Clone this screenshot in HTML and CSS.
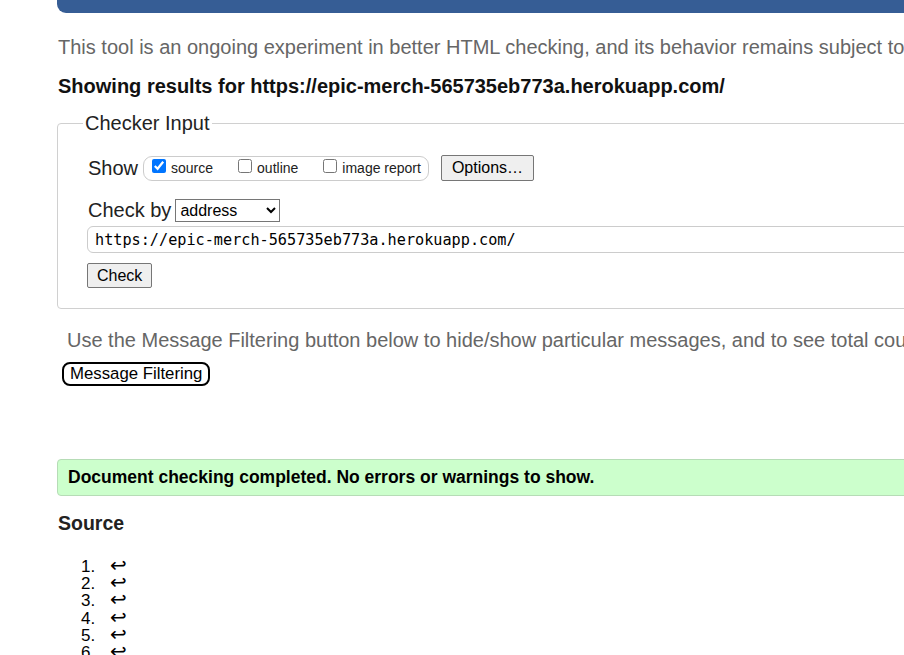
FILE: index.html
```html
<!DOCTYPE html>
<html lang="en">
<head>
<meta charset="utf-8">
<title>Nu Html Checker</title>
<link rel="stylesheet" href="styles.css">
</head>
<body>
<div class="page">
  <div class="topbar"></div>
  <p class="intro">This tool is an ongoing experiment in better HTML checking, and its behavior remains subject to change</p>
  <h2 class="results">Showing results for https://epic-merch-565735eb773a.herokuapp.com/</h2>
  <fieldset class="checker">
    <legend>Checker Input</legend>
    <div class="row show-row">
      <span class="label">Show</span>
      <div class="showbox">
        <label class="opt"><input type="checkbox" checked> source</label>
        <label class="opt"><input type="checkbox"> outline</label>
        <label class="opt"><input type="checkbox"> image report</label>
      </div>
      <button class="btn options">Options…</button>
    </div>
    <div class="row checkby-row">
      <span class="label">Check by</span>
      <select class="sel"><option>address</option></select>
    </div>
    <input class="url" type="text" value="https://epic-merch-565735eb773a.herokuapp.com/">
    <div class="row">
      <button class="btn check">Check</button>
    </div>
  </fieldset>
  <p class="filter-note">Use the Message Filtering button below to hide/show particular messages, and to see total counts of errors and warnings.</p>
  <button class="msgfilter">Message Filtering</button>
  <div class="success">Document checking completed. No errors or warnings to show.</div>
  <h3 class="source">Source</h3>
  <ol class="lines">
    <li><span class="lf">↩</span></li>
    <li><span class="lf">↩</span></li>
    <li><span class="lf">↩</span></li>
    <li><span class="lf">↩</span></li>
    <li><span class="lf">↩</span></li>
    <li><span class="lf">↩</span></li>
    <li><span class="lf">↩</span></li>
  </ol>
</div>
</body>
</html>
```
FILE: styles.css
```css
html, body {
  margin: 0;
  padding: 0;
  overflow: hidden;
  background: #fff;
}
body {
  font-family: "Liberation Sans", Arial, sans-serif;
  color: #000;
}
.page {
  width: 1300px;
  padding-left: 57px;
}
.topbar {
  height: 13px;
  background: #365d95;
  border-bottom-left-radius: 9px;
}
.intro {
  margin: 23px 0 0 1px;
  font-size: 20px;
  line-height: 22px;
  color: #666;
  white-space: nowrap;
}
.results {
  margin: 16px 0 0 1px;
  font-size: 20px;
  line-height: 24px;
  font-weight: bold;
  color: #111;
}
.checker {
  margin: 14px 0 0 0;
  padding: 20px 0 20px 30px;
  border: 1px solid #d0d0d0;
  border-radius: 4px;
}
.checker legend {
  font-size: 20px;
  color: #222;
  padding: 0 2px;
  margin-left: -5px;
}
.row {
  display: flex;
  align-items: center;
}
.label {
  font-size: 20px;
  color: #222;
}
.showbox {
  display: flex;
  align-items: center;
  margin-left: 5px;
  height: 23px;
  padding: 0 7px 0 8px;
  border: 1px solid #ccc;
  border-radius: 9px;
}
.opt {
  font-size: 14px;
  display: flex;
  align-items: center;
  margin-right: 25px;
  color: #222;
}
.opt:last-child { margin-right: 0; }
.opt input {
  margin: 0 5px 4px 0;
  width: 14px;
  height: 14px;
}
.btn {
  font-family: "Liberation Sans", Arial, sans-serif;
  font-size: 16px;
  background: #efefef;
  border: 1px solid #767676;
  border-radius: 2px;
  color: #000;
  padding: 1px 6px;
}
.options {
  margin-left: 12px;
  height: 26px;
  padding: 0 10px;
}
.checkby-row {
  margin-top: 18px;
}
.sel {
  margin-left: 4px;
  font-family: "Liberation Sans", Arial, sans-serif;
  font-size: 16px;
  width: 105px;
  height: 23px;
  border: 1px solid #767676;
  border-radius: 0;
  background: #fff;
  color: #000;
}
.url {
  display: block;
  margin: 4px 0 0 -1px;
  width: 1100px;
  box-sizing: border-box;
  height: 27px;
  padding: 0 7px;
  border: 1px solid #ccc;
  border-radius: 6px;
  font-family: "DejaVu Sans Mono", monospace;
  font-size: 15.2px;
  color: #000;
}
.check {
  margin: 10px 0 0 -1px;
  height: 25px;
  padding: 0 9px;
}
.filter-note {
  margin: 20px 0 0 10px;
  font-size: 20px;
  line-height: 22px;
  color: #666;
  white-space: nowrap;
}
.msgfilter {
  display: block;
  margin: 11px 0 0 5px;
  font-family: "Liberation Sans", Arial, sans-serif;
  font-size: 16.8px;
  background: #fff;
  border: 2px solid #000;
  border-radius: 8px;
  height: 24px;
  padding: 0 6px;
  color: #000;
}
.success {
  margin-top: 73px;
  height: 37px;
  box-sizing: border-box;
  padding: 0 10px;
  display: flex;
  align-items: center;
  background: #ccffcc;
  border: 1px solid #b6dcb6;
  border-radius: 4px;
  font-size: 17.5px;
  font-weight: bold;
  color: #000;
}
.source {
  margin: 16px 0 0 1px;
  font-size: 19.5px;
  line-height: 22px;
  font-weight: bold;
  color: #222;
}
.lines {
  margin: 24px 0 0 0;
  padding-left: 43px;
  font-size: 17px;
  line-height: 17.2px;
  color: #000;
}
.lines li {
  height: 17.2px;
  padding-left: 10px;
}
.lf {
  font-family: "DejaVu Sans", sans-serif;
  font-size: 20px;
  line-height: 0;
}
```
